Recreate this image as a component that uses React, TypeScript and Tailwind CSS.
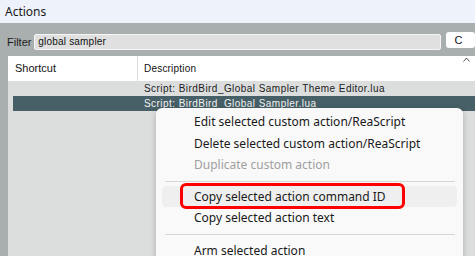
import React from "react";

const menuFont = { fontFamily: '"Noto Sans", "Open Sans", sans-serif' };

export default function App() {
  return (
    <div className="relative w-[475px] h-[256px] overflow-hidden bg-[#a9aeae] flex flex-col" style={{ fontFamily: '"Liberation Sans", Arial, sans-serif' }}>
      <div className="h-[23px] shrink-0 bg-[#eef2fa] pl-[5px] flex items-center text-[12px] text-[#1a1a1a]" style={menuFont}>
        Actions
      </div>
      <div className="h-[33px] shrink-0 flex items-start pt-[11px] pl-[7px]">
        <span className="text-[11px] text-[#1c1c1c] leading-[16px] w-[28px]">Filter</span>
        <div className="w-[417px] h-[16px] bg-[#dfe0df] border border-[#f4f5f4] rounded-[2px] pl-[3px] text-[10px] leading-[14px] text-[#111] tracking-[0.2px]">global sampler</div>
        <div className="ml-[5px] -mt-[2px] w-[30px] h-[16px] bg-white rounded-[3px] pl-[9px] text-[11px] leading-[16px] text-[#111]">C</div>
      </div>
      <div className="ml-[8px] flex-1 bg-[#dcdedd] flex flex-col">
        <div className="relative h-[25px] bg-white flex text-[11px] text-[#111]">
          <div className="w-[130px] pl-[7px] flex items-center border-r border-[#dedede]">Shortcut</div>
          <div className="pl-[6px] flex items-center text-[10px] tracking-[0.2px]">Description</div>
          <svg className="absolute left-[455px] top-[1px]" width="7" height="5" viewBox="0 0 7 5">
            <path d="M0.5 4.5 L3.5 1 L6.5 4.5" fill="none" stroke="#555" strokeWidth="1" />
          </svg>
        </div>
        <div className="h-[15px] flex text-[10px] leading-[15px] text-[#222] tracking-[0.45px]">
          <div className="w-[130px]" />
          <div className="pl-[6px] whitespace-nowrap">Script: BirdBird_Global Sampler Theme Editor.lua</div>
        </div>
        <div className="ml-[5px] h-[15px] flex bg-[#475f66] text-[10px] leading-[15px] text-[#f2f2f2] tracking-[0.45px]">
          <div className="w-[125px]" />
          <div className="pl-[6px] whitespace-nowrap">Script: BirdBird_Global Sampler.lua</div>
        </div>
      </div>

      <div className="absolute left-[156px] top-[108px] w-[307px] h-[160px] bg-[#f9f9f9] rounded-[6px] shadow-[0_2px_6px_rgba(0,0,0,0.22)] pt-[3px] text-[12px] text-[#1a1a1a]" style={menuFont}>
        <div className="h-[22px] pl-[38px] flex items-center">Edit selected custom action/ReaScript</div>
        <div className="h-[21px] pl-[38px] flex items-center">Delete selected custom action/ReaScript</div>
        <div className="h-[22px] pl-[38px] flex items-center text-[#a0a0a0]">Duplicate custom action</div>
        <div className="h-[10px] flex items-center ml-[9px] mr-[8px]"><div className="h-px w-full bg-[#d6d6d6]" /></div>
        <div className="h-[21px] mx-[6px] pl-[32px] rounded-[4px] bg-[#efefef] flex items-center">Copy selected action command ID</div>
        <div className="h-[22px] pl-[38px] flex items-center">Copy selected action text</div>
        <div className="h-[11px] flex items-center ml-[9px] mr-[8px]"><div className="h-px w-full bg-[#d6d6d6]" /></div>
        <div className="h-[21px] pl-[38px] flex items-center">Arm selected action</div>
      </div>

      <div className="absolute left-[180px] top-[183px] w-[225px] h-[26px] border-[3px] border-[#ff0000] rounded-[6px]" />
    </div>
  );
}
